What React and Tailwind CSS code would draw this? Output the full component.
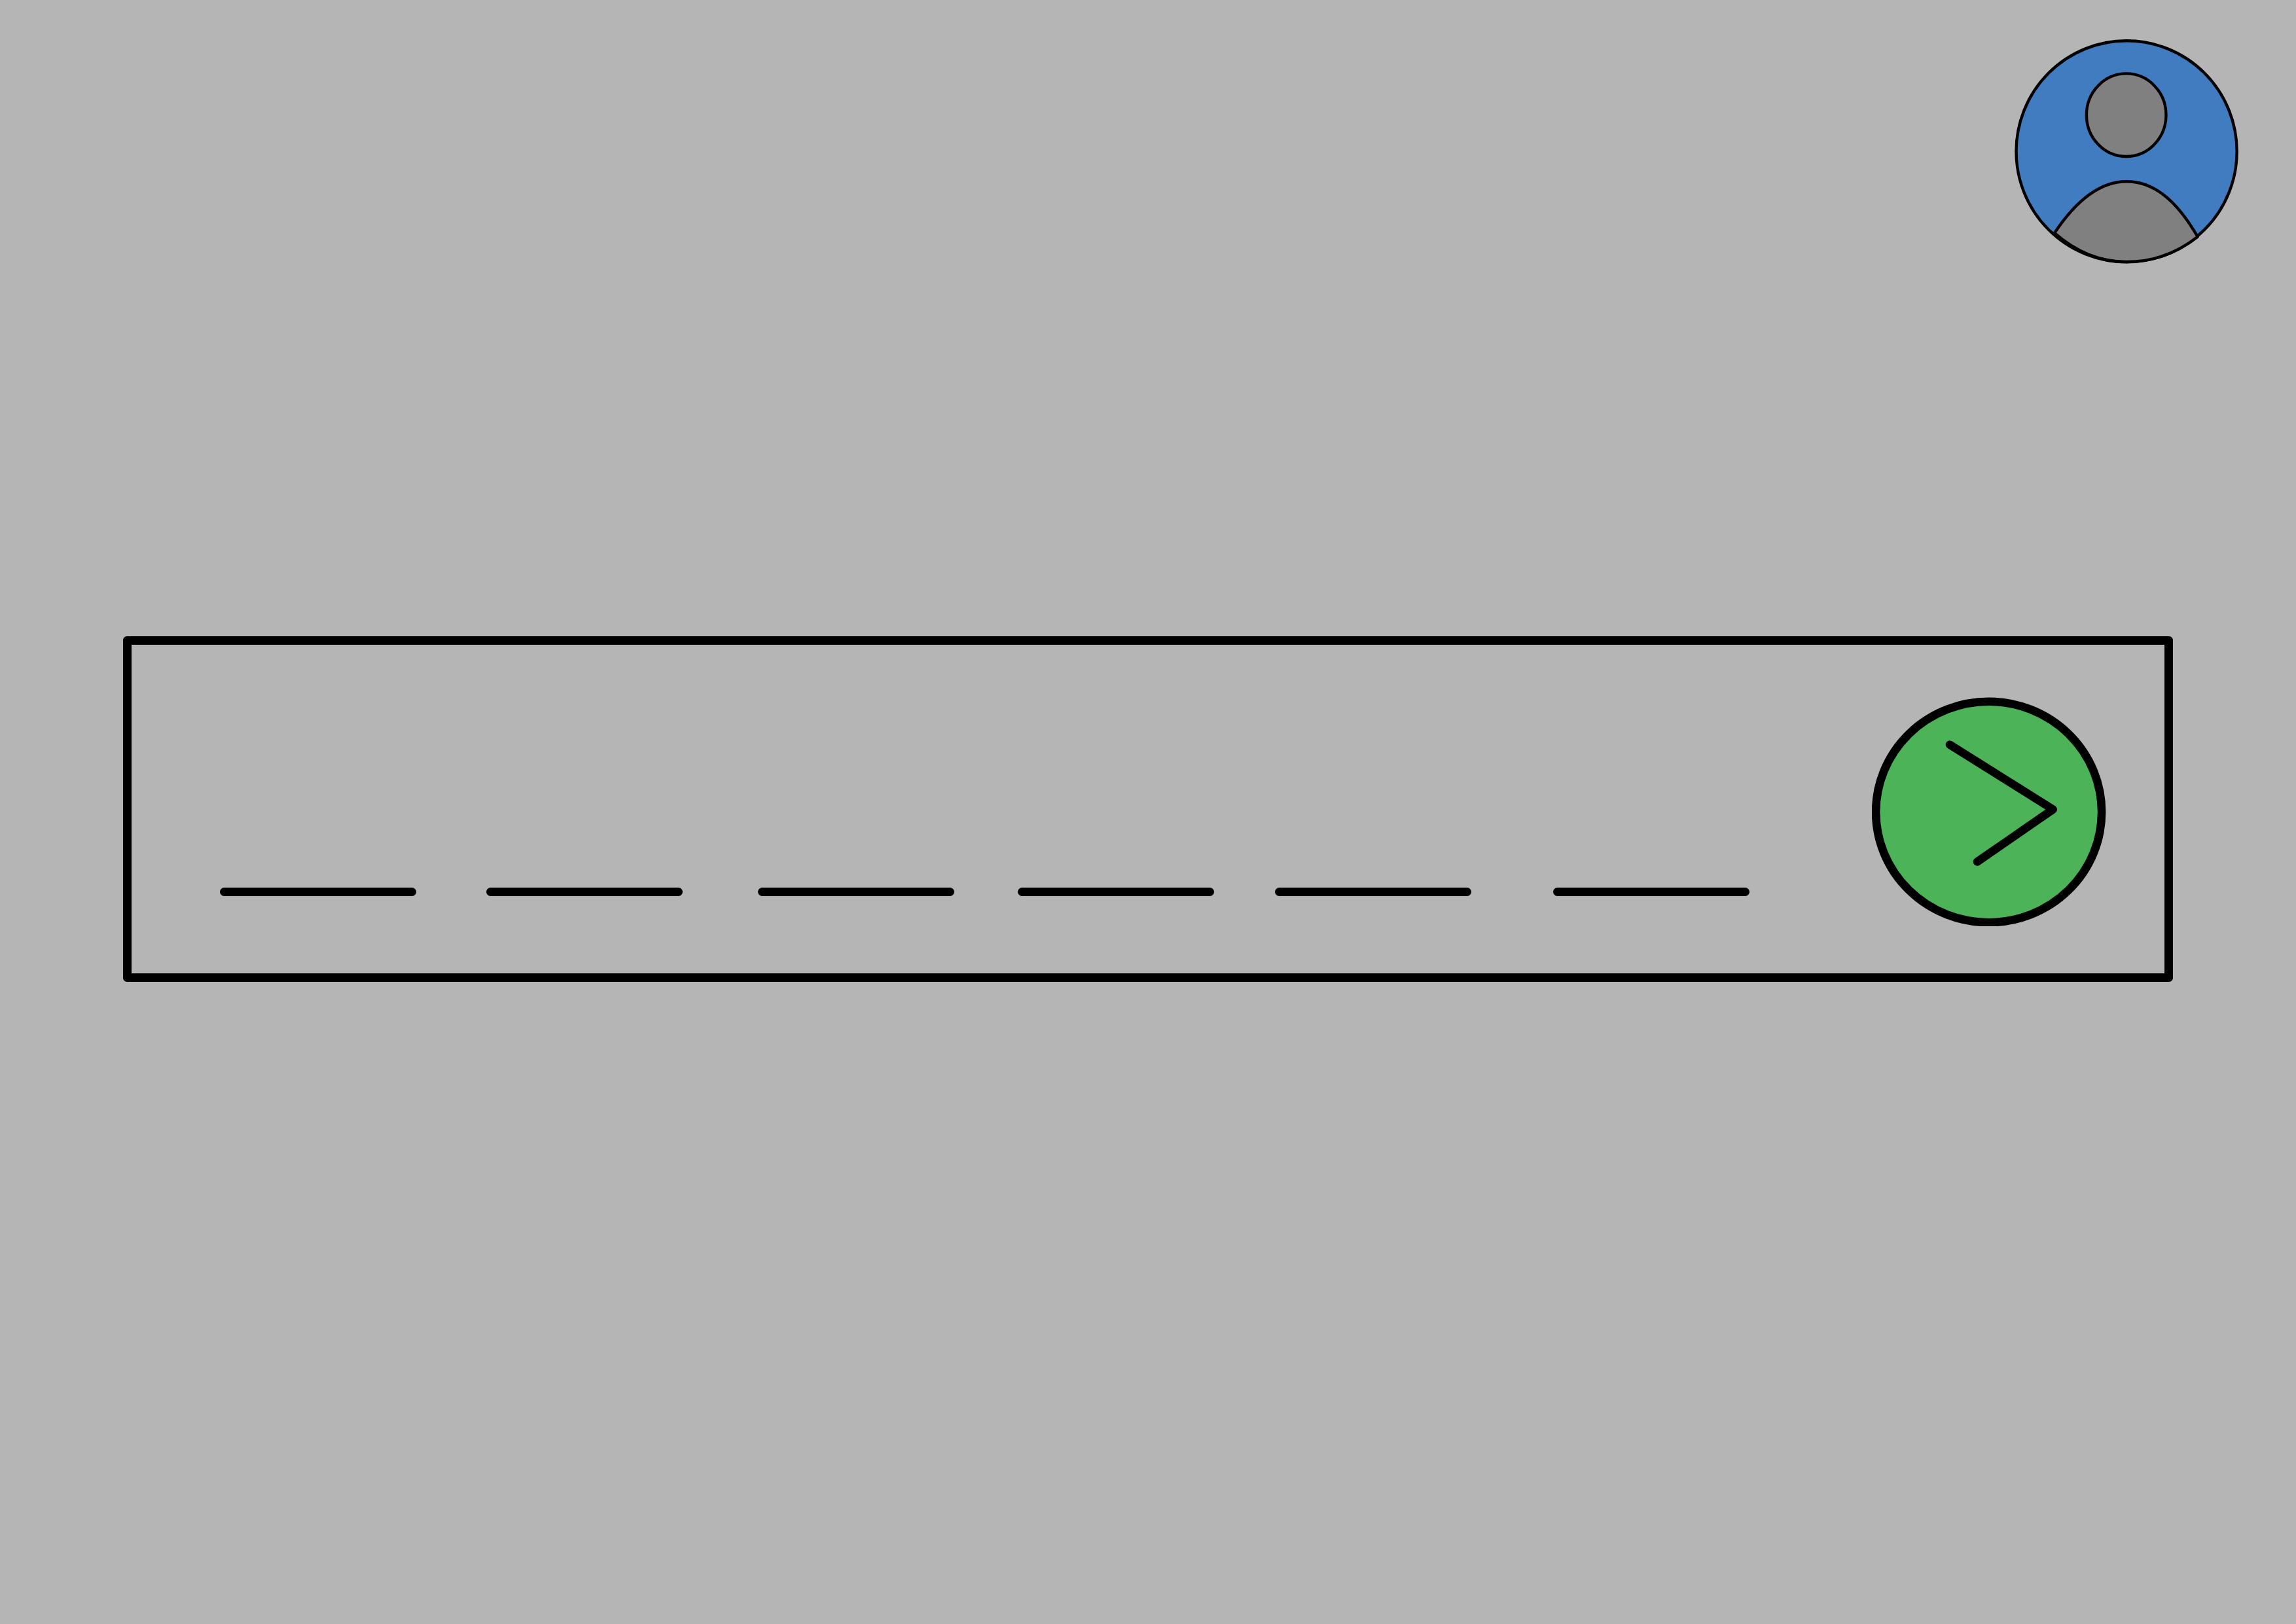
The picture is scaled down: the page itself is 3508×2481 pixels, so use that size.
const fields = [
  { id: "digit-1", gap: "" },
  { id: "digit-2", gap: "ml-[107px]" },
  { id: "digit-3", gap: "ml-[115px]" },
  { id: "digit-4", gap: "ml-[97px]" },
  { id: "digit-5", gap: "ml-[93px]" },
  { id: "digit-6", gap: "ml-[125px]" },
];

function Avatar() {
  return (
    <svg className="block h-[343px] w-[342px]" viewBox="0 0 342 343" fill="none" stroke="#000" strokeWidth="4.4" strokeLinejoin="round" aria-hidden="true">
      <ellipse cx="171.1" cy="171.3" rx="168.6" ry="169" fill="#417cc0" />
      <ellipse cx="170.7" cy="115.7" rx="60.8" ry="63.3" fill="#808080" />
      <path
        d="M61 296C95 245 132 217.3 171 217.3C212 217.3 247 245 279.7 301.7C249 326 213 340 171 340C131 340 94 325 61 296Z"
        fill="#808080"
      />
    </svg>
  );
}

function SubmitIcon() {
  return (
    <svg className="block h-[350px] w-[358px]" viewBox="0 0 358 350" fill="none" stroke="#000" strokeWidth="12.6" strokeLinecap="round" strokeLinejoin="round" aria-hidden="true">
      <ellipse cx="178.6" cy="175.5" rx="172.5" ry="168.7" fill="#4db359" />
      <path d="M119 72.7L276.7 171.5L161 251.5" />
    </svg>
  );
}

function DigitField({ id, label, gap }) {
  return (
    <div className={`flex min-w-0 flex-1 flex-col ${gap}`}>
      <input
        id={id}
        type="text"
        aria-label={label}
        inputMode="numeric"
        maxLength={1}
        className="h-[240px] w-full bg-transparent text-center font-['Liberation_Sans',sans-serif] text-[200px] leading-none text-black outline-none"
      />
      <span className="h-[13px] rounded-full bg-black" />
    </div>
  );
}

export default function App() {
  return (
    <div className="flex min-h-screen flex-col bg-[#b5b5b5]">
      <header className="flex justify-end pt-[60px] pr-[88px]">
        <button type="button" aria-label="Profile" className="rounded-full">
          <Avatar />
        </button>
      </header>
      <main className="mt-[569px] px-[188px]">
        <form
          className="flex items-end rounded-[6px] border-[13px] border-black pt-[80px] pr-[89px] pb-[72px] pl-[135px]"
          onSubmit={(event) => event.preventDefault()}
        >
          <div className="mb-[46px] flex min-w-0 flex-1">
            {fields.map((field, index) => (
              <DigitField key={field.id} id={field.id} label={`Digit ${index + 1}`} gap={field.gap} />
            ))}
          </div>
          <button type="submit" aria-label="Continue" className="ml-[187px] shrink-0 rounded-full">
            <SubmitIcon />
          </button>
        </form>
      </main>
    </div>
  );
}
